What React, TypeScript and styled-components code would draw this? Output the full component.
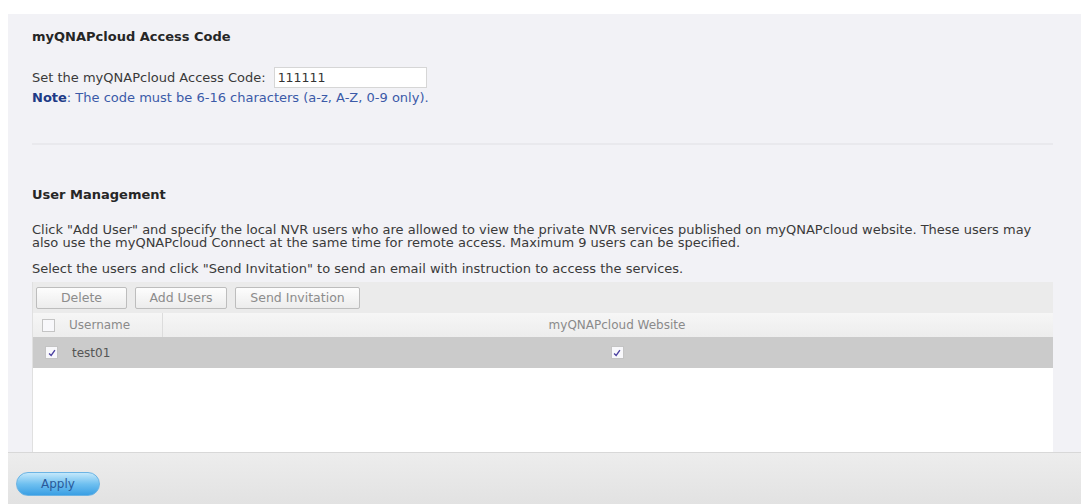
import React from 'react';
import styled, { createGlobalStyle } from 'styled-components';

const GlobalStyle = createGlobalStyle`
    html, body {
        margin: 0;
        padding: 0;
        background: #ffffff;
    }
    body {
        font-family: "DejaVu Sans", Verdana, sans-serif;
        font-size: 13px;
        color: #3a3a3a;
    }
`;

const users = [{ name: 'test01', checked: true, website: true }];

const Check = ({ checked }: { checked?: boolean }) => (
    <Box>
        {checked && (
            <svg viewBox="0 0 12 12" width="10" height="10">
                <path d="M2.5 6.5 L5 9 L9.5 2.5" fill="none" stroke="#4a3fa0" strokeWidth="1.6" />
            </svg>
        )}
    </Box>
);

const App = () => (
    <>
        <GlobalStyle />
        <Page>
            <Panel>
                <Title>myQNAPcloud Access Code</Title>
                <FieldRow>
                    <span>Set the myQNAPcloud Access Code:</span>
                    <CodeInput defaultValue="111111" />
                </FieldRow>
                <Note>
                    <b>Note</b>: The code must be 6-16 characters (a-z, A-Z, 0-9 only).
                </Note>
                <Separator />
                <Title $gap={43}>User Management</Title>
                <Para>
                    Click "Add User" and specify the local NVR users who are allowed to view the private NVR services published on myQNAPcloud website. These users may
                    <br />
                    also use the myQNAPcloud Connect at the same time for remote access. Maximum 9 users can be specified.
                </Para>
                <Para $gap={13}>
                    Select the users and click "Send Invitation" to send an email with instruction to access the services.
                </Para>
                <Grid>
                    <Toolbar>
                        <ToolButton $w={91}>Delete</ToolButton>
                        <ToolButton $w={92}>Add Users</ToolButton>
                        <ToolButton $w={125}>Send Invitation</ToolButton>
                    </Toolbar>
                    <HeaderRow>
                        <FirstCell>
                            <Check />
                            <span>Username</span>
                        </FirstCell>
                        <CenterCell>myQNAPcloud Website</CenterCell>
                    </HeaderRow>
                    {users.map(u => (
                        <DataRow key={u.name} $selected={u.checked}>
                            <FirstCell>
                                <Check checked={u.checked} />
                                <span>{u.name}</span>
                            </FirstCell>
                            <CenterCell>
                                <Check checked={u.website} />
                            </CenterCell>
                        </DataRow>
                    ))}
                </Grid>
            </Panel>
            <Footer>
                <ApplyButton>Apply</ApplyButton>
            </Footer>
        </Page>
    </>
);

export default App;

const Page = styled.div`
    display: flex;
    flex-direction: column;
    height: 490px;
    margin: 14px 0 0 8px;
`;

const Panel = styled.div`
    flex: 1;
    display: flex;
    flex-direction: column;
    padding: 16px 28px 0 24px;
    background: #f2f2f6;
`;

const Title = styled.div<{ $gap?: number }>`
    margin-top: ${p => p.$gap ?? 0}px;
    font-size: 13px;
    line-height: 14px;
    font-weight: bold;
    color: #262626;
`;

const FieldRow = styled.div`
    display: flex;
    align-items: center;
    gap: 8px;
    margin-top: 23px;
    height: 21px;
    font-size: 13px;
`;

const CodeInput = styled.input`
    width: 145px;
    height: 15px;
    padding: 2px 3px;
    border: 1px solid #d6d6d6;
    background: #ffffff;
    font-family: "DejaVu Sans", Verdana, sans-serif;
    font-size: 12.5px;
    color: #333;
    outline: none;
`;

const Note = styled.div`
    margin-top: 3px;
    line-height: 14px;
    font-size: 13px;
    color: #3b5aa8;

    b {
        color: #203a86;
    }
`;

const Separator = styled.div`
    margin-top: 38px;
    height: 2px;
    background: #e9e9ed;
`;

const Para = styled.div<{ $gap?: number }>`
    margin-top: ${p => p.$gap ?? 21}px;
    line-height: 13px;
    font-size: 13px;
    white-space: nowrap;
    color: #3a3a3a;
`;

const Grid = styled.div`
    flex: 1;
    display: flex;
    flex-direction: column;
    margin-top: 7px;
    background: #ffffff;
    border-left: 1px solid #e0e0e0;
`;

const Toolbar = styled.div`
    display: flex;
    align-items: center;
    gap: 8px;
    height: 31px;
    padding: 0 3px;
    background: #ebebeb;
`;

const ToolButton = styled.button<{ $w: number }>`
    width: ${p => p.$w}px;
    height: 22px;
    padding: 0;
    border: 1px solid #bdbdbd;
    border-radius: 2px;
    background: linear-gradient(#fdfdfd, #ececec);
    font-family: "DejaVu Sans", Verdana, sans-serif;
    font-size: 12.5px;
    color: #8c8c8c;
`;

const HeaderRow = styled.div`
    display: flex;
    height: 24px;
    background: linear-gradient(#f6f6f6, #ededed);
    color: #8a8a8a;
    font-size: 12px;
`;

const DataRow = styled.div<{ $selected?: boolean }>`
    display: flex;
    height: 31px;
    background: ${p => (p.$selected ? '#cbcbcb' : '#ffffff')};
    color: #555;
    font-size: 12px;
`;

const FirstCell = styled.div`
    display: flex;
    align-items: center;
    gap: 14px;
    width: 130px;
    padding-left: 9px;
    box-sizing: border-box;
    border-right: 1px solid #dcdcdc;

    ${DataRow} & {
        border-right: none;
        padding-left: 12px;
        gap: 14px;
    }
`;

const CenterCell = styled.div`
    flex: 1;
    display: flex;
    align-items: center;
    justify-content: center;
    padding-left: 18px;
`;

const Box = styled.span`
    display: inline-flex;
    align-items: center;
    justify-content: center;
    width: 11px;
    height: 11px;
    border: 1px solid #c4c4c4;
    background: #f8f8fb;
`;

const Footer = styled.div`
    display: flex;
    align-items: center;
    height: 52px;
    padding: 0 8px;
    background: linear-gradient(#ededed, #e2e2e2);
    border-top: 1px solid #d8d8d8;
    box-sizing: border-box;
`;

const ApplyButton = styled.button`
    width: 84px;
    height: 24px;
    margin-top: 10px;
    border: 1px solid #6cb4e4;
    border-radius: 12px;
    background: linear-gradient(#c4e8fb, #6fc0f0 50%, #3a9fe4);
    font-family: "DejaVu Sans", Verdana, sans-serif;
    font-size: 12px;
    color: #2a5a9a;
`;
